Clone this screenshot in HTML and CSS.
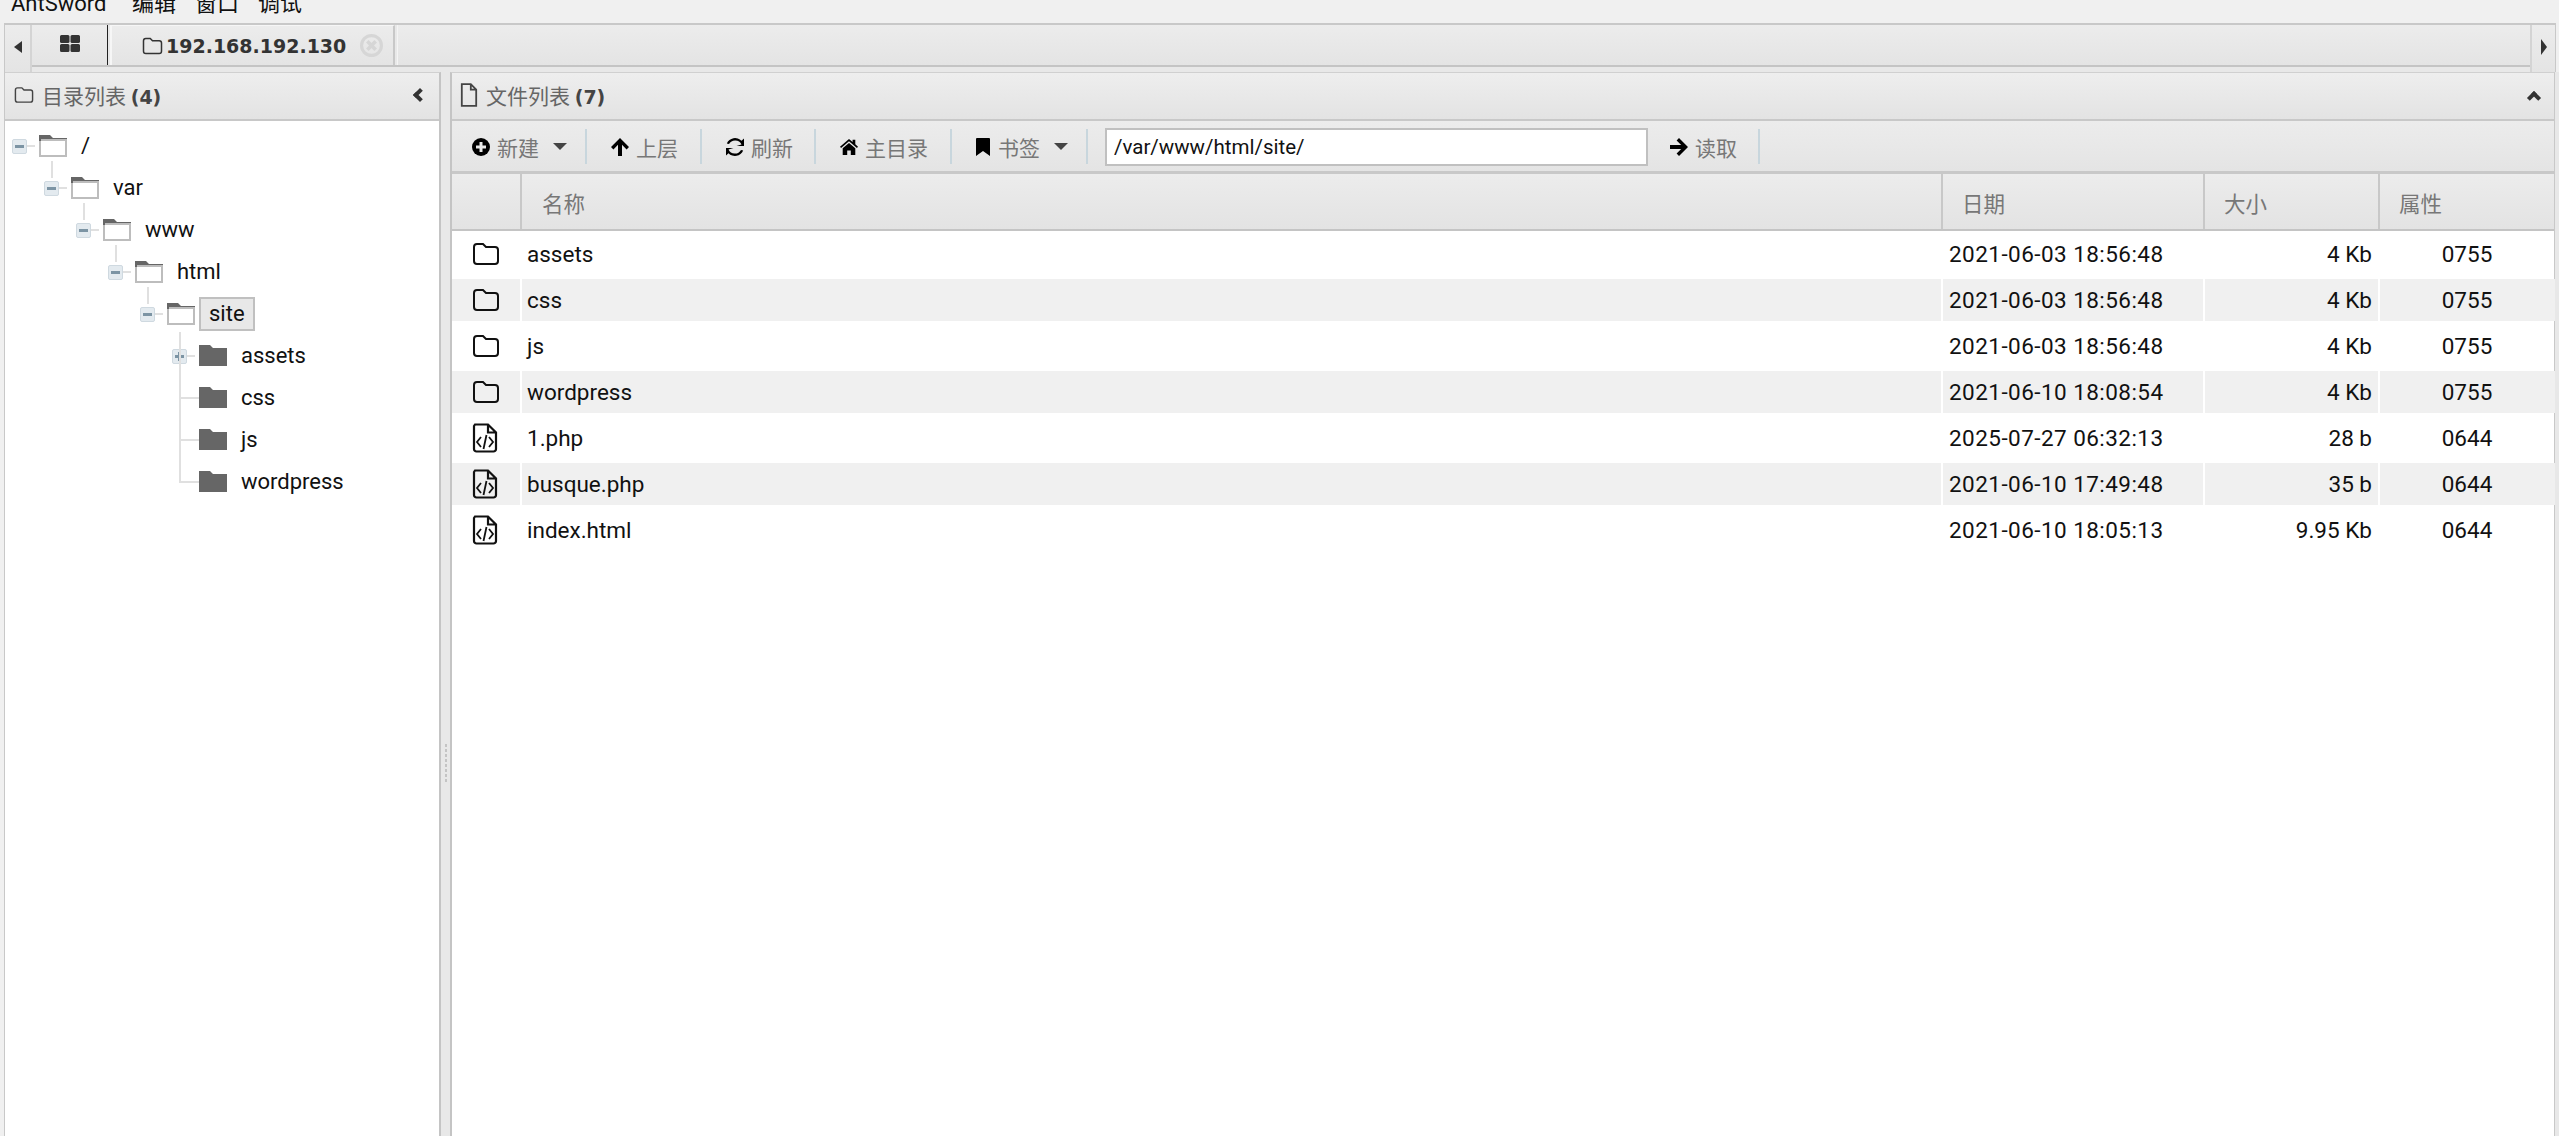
FILE: index.html
```html
<!DOCTYPE html>
<html lang="zh">
<head>
<meta charset="utf-8">
<title>AntSword</title>
<link rel="stylesheet" href="styles.css">
</head>
<body>
<svg class="defs" width="0" height="0">
  <symbol id="i-folder-o" viewBox="0 0 28 24"><path d="M5 2h6l3 3h9a3 3 0 0 1 3 3v11a3 3 0 0 1-3 3H5a3 3 0 0 1-3-3V5a3 3 0 0 1 3-3z" fill="none" stroke="currentColor" stroke-width="2"/></symbol>
  <symbol id="i-file-o" viewBox="0 0 20 26"><path d="M2 1h10l6 6v18H2zM12 1v6h6" fill="none" stroke="currentColor" stroke-width="2"/></symbol>
  <symbol id="i-code" viewBox="0 0 26 30"><path d="M3 1.500h13l8 8V26a2.500 2.500 0 0 1-2.500 2.500h-17A2.500 2.500 0 0 1 2 26V3zM16 1.500V9.500h8" fill="none" stroke="currentColor" stroke-width="2.200"/><path d="M9 14l-4 5 4 5M17 14l4 5-4 5M14.500 12l-3 14" fill="none" stroke="currentColor" stroke-width="1.800"/></symbol>
  <symbol id="i-tree-open" viewBox="0 0 28 22"><path d="M0 0h11l3 3h14v3H0z" fill="#666"/><path d="M1 5h26v16H1z" fill="#fff" stroke="#bdbdbd" stroke-width="2"/><path d="M0 0h2v6H0z" fill="#666"/></symbol>
  <symbol id="i-tree-full" viewBox="0 0 28 22"><path d="M0 0h11l3 3h14v18H0z" fill="#666"/></symbol>
  <symbol id="i-plus" viewBox="0 0 18 18"><circle cx="9" cy="9" r="9"/><path d="M7.500 4h3v3.500H14v3h-3.500V14h-3v-3.500H4v-3h3.500z" fill="#e8e8e8"/></symbol>
  <symbol id="i-up" viewBox="0 0 18 18"><path d="M9 0l9 9-2.400 2.400-4.600-4.600V18H7V6.800l-4.600 4.600L0 9z"/></symbol>
  <symbol id="i-right" viewBox="0 0 18 18"><path d="M18 9l-9 9-2.400-2.400 4.600-4.600H0V7h11.200L6.600 2.400 9 0z"/></symbol>
  <symbol id="i-refresh" viewBox="0 0 18 18"><path d="M15.500 6.500A7 7 0 0 0 3 6L.8 5.400A9 9 0 0 1 15.500 2.800L18 .5V8h-7.500z"/><path d="M2.500 11.500A7 7 0 0 0 15 12l2.200.6A9 9 0 0 1 2.500 15.200L0 17.500V10h7.500z"/></symbol>
  <symbol id="i-home" viewBox="0 0 20 18"><path d="M10 0l4 3.400V1h3v5l3 2.600-1.200 1.400L10 2.600 1.200 10 0 8.600z"/><path d="M10 4.500l7 5.800V18h-5v-5H8v5H3v-7.700z"/></symbol>
  <symbol id="i-bookmark" viewBox="0 0 14 18"><path d="M1 0h12a1 1 0 0 1 1 1v17l-7-5-7 5V1a1 1 0 0 1 1-1z"/></symbol>
  <symbol id="i-grid" viewBox="0 0 20 17"><path d="M0 1.500A1.500 1.500 0 0 1 1.500 0H8a1.500 1.500 0 0 1 1.500 1.500V7A1.500 1.500 0 0 1 8 8H1.500A1.500 1.500 0 0 1 0 7zM10.500 1.500A1.500 1.500 0 0 1 12 0h6.500A1.500 1.500 0 0 1 20 1.500V7a1.500 1.500 0 0 1-1.500 1H12a1.500 1.500 0 0 1-1.500-1zM0 10.500A1.500 1.500 0 0 1 1.500 9H8a1.500 1.500 0 0 1 1.500 1.500v5A1.500 1.500 0 0 1 8 17H1.500A1.500 1.500 0 0 1 0 15.500zM10.500 10.500A1.500 1.500 0 0 1 12 9h6.500a1.500 1.500 0 0 1 1.500 1.500v5a1.500 1.500 0 0 1-1.500 1.500H12a1.500 1.500 0 0 1-1.500-1.500z"/></symbol>
  <symbol id="i-close" viewBox="0 0 22 22"><circle cx="11" cy="11" r="9.500" fill="none" stroke="currentColor" stroke-width="3"/><path d="M7 7l8 8M15 7l-8 8" fill="none" stroke="currentColor" stroke-width="3.500"/></symbol>
</svg>

<div class="app">
  <nav class="menubar">
    <span class="menu-item menu-brand">AntSword</span>
    <span class="menu-item">编辑</span>
    <span class="menu-item">窗口</span>
    <span class="menu-item">调试</span>
  </nav>

  <div class="tabbar">
    <div class="tab-arrow"><span class="caret-left"></span></div>
    <div class="tab-strip">
      <div class="tab tab-home"><svg class="ic-grid"><use href="#i-grid"/></svg></div>
      <div class="tab tab-active">
        <svg class="ic-tab-folder"><use href="#i-folder-o"/></svg>
        <span class="tab-title">192.168.192.130</span>
        <svg class="ic-close"><use href="#i-close"/></svg>
      </div>
      <div class="tab-rest"></div>
    </div>
    <div class="tab-arrow tab-arrow-right"><span class="caret-right"></span></div>
  </div>

  <main class="workspace">
    <aside class="panel-left">
      <header class="panel-head">
        <svg class="ic-head-folder"><use href="#i-folder-o"/></svg>
        <span class="head-title">目录列表 <b>(4)</b></span>
        <span class="chevron chevron-left"></span>
      </header>
      <div class="tree">
        <div class="node l0"><span class="exp minus"></span><svg class="tf"><use href="#i-tree-open"/></svg><span class="nl">/</span></div>
        <div class="node l1 has-up"><span class="exp minus"></span><svg class="tf"><use href="#i-tree-open"/></svg><span class="nl">var</span></div>
        <div class="node l2 has-up"><span class="exp minus"></span><svg class="tf"><use href="#i-tree-open"/></svg><span class="nl">www</span></div>
        <div class="node l3 has-up"><span class="exp minus"></span><svg class="tf"><use href="#i-tree-open"/></svg><span class="nl">html</span></div>
        <div class="node l4 has-up"><span class="exp minus"></span><svg class="tf"><use href="#i-tree-open"/></svg><span class="nl nl-sel">site</span></div>
        <div class="node l5 has-up has-down"><span class="exp plus"></span><svg class="tf"><use href="#i-tree-full"/></svg><span class="nl">assets</span></div>
        <div class="node l5 has-through"><span class="exp none"></span><svg class="tf"><use href="#i-tree-full"/></svg><span class="nl">css</span></div>
        <div class="node l5 has-through"><span class="exp none"></span><svg class="tf"><use href="#i-tree-full"/></svg><span class="nl">js</span></div>
        <div class="node l5 has-last"><span class="exp none"></span><svg class="tf"><use href="#i-tree-full"/></svg><span class="nl">wordpress</span></div>
      </div>
    </aside>

    <div class="splitter"><span class="grip"></span></div>

    <section class="panel-right">
      <header class="panel-head">
        <svg class="ic-head-file"><use href="#i-file-o"/></svg>
        <span class="head-title">文件列表 <b>(7)</b></span>
        <span class="chevron chevron-up"></span>
      </header>
      <div class="toolbar">
        <div class="tb tb-new"><svg class="ti"><use href="#i-plus"/></svg><span>新建</span><i class="caret-down"></i></div>
        <div class="tb tb-up"><svg class="ti"><use href="#i-up"/></svg><span>上层</span></div>
        <div class="tb tb-refresh"><svg class="ti"><use href="#i-refresh"/></svg><span>刷新</span></div>
        <div class="tb tb-home"><svg class="ti"><use href="#i-home"/></svg><span>主目录</span></div>
        <div class="tb tb-mark"><svg class="ti ti-mark"><use href="#i-bookmark"/></svg><span>书签</span><i class="caret-down"></i></div>
        <div class="path-wrap"><input class="path" type="text" value="/var/www/html/site/"></div>
        <div class="tb tb-read"><svg class="ti"><use href="#i-right"/></svg><span>读取</span></div>
      </div>
      <div class="grid-head">
        <div class="gh"></div>
        <div class="gh gh-name">名称</div>
        <div class="gh">日期</div>
        <div class="gh">大小</div>
        <div class="gh gh-last">属性</div>
      </div>
      <div class="grid-body">
        <div class="row"><div class="c c-ic"><svg class="fi"><use href="#i-folder-o"/></svg></div><div class="c c-name">assets</div><div class="c c-date">2021-06-03 18:56:48</div><div class="c c-size">4 Kb</div><div class="c c-attr">0755</div></div>
        <div class="row alt"><div class="c c-ic"><svg class="fi"><use href="#i-folder-o"/></svg></div><div class="c c-name">css</div><div class="c c-date">2021-06-03 18:56:48</div><div class="c c-size">4 Kb</div><div class="c c-attr">0755</div></div>
        <div class="row"><div class="c c-ic"><svg class="fi"><use href="#i-folder-o"/></svg></div><div class="c c-name">js</div><div class="c c-date">2021-06-03 18:56:48</div><div class="c c-size">4 Kb</div><div class="c c-attr">0755</div></div>
        <div class="row alt"><div class="c c-ic"><svg class="fi"><use href="#i-folder-o"/></svg></div><div class="c c-name">wordpress</div><div class="c c-date">2021-06-10 18:08:54</div><div class="c c-size">4 Kb</div><div class="c c-attr">0755</div></div>
        <div class="row"><div class="c c-ic"><svg class="ci"><use href="#i-code"/></svg></div><div class="c c-name">1.php</div><div class="c c-date">2025-07-27 06:32:13</div><div class="c c-size">28 b</div><div class="c c-attr">0644</div></div>
        <div class="row alt"><div class="c c-ic"><svg class="ci"><use href="#i-code"/></svg></div><div class="c c-name">busque.php</div><div class="c c-date">2021-06-10 17:49:48</div><div class="c c-size">35 b</div><div class="c c-attr">0644</div></div>
        <div class="row"><div class="c c-ic"><svg class="ci"><use href="#i-code"/></svg></div><div class="c c-name">index.html</div><div class="c c-date">2021-06-10 18:05:13</div><div class="c c-size">9.95 Kb</div><div class="c c-attr">0644</div></div>
      </div>
    </section>
  </main>
</div>
</body>
</html>
```

FILE: styles.css
```css
* { box-sizing: border-box; }
html, body { margin: 0; height: 100%; overflow: hidden; }
body {
  background: #f0f0f0;
  color: #111;
  font-family: Roboto, "Noto Sans CJK SC", sans-serif;
  font-size: 22px;
}
.defs { position: absolute; }
svg { display: block; fill: currentColor; flex: none; }

.app { width: 2559px; height: 1136px; display: flex; flex-direction: column; }

/* menu */
.menubar { height: 23px; flex: none; display: flex; overflow: hidden; background: #f0f0f0; padding-left: 11px; }
.menu-item { margin-top: -11px; margin-right: 24px; line-height: 30px; font-size: 22px; color: #111; width: 39px; white-space: nowrap; }
.menu-brand { width: 97px; }

/* tabs */
.tabbar { height: 49px; width: 2552px; flex: none; display: flex; margin-left: 4px; border: solid #c8c8c8; border-width: 2px 1px 0 1px; background: #e8e8e8; }
.tab-arrow { width: 27px; flex: none; display: flex; align-items: center; justify-content: center; border-right: 2px solid #d4d4d4; padding-bottom: 3px; background: linear-gradient(#ececec, #e4e4e4); }
.tab-arrow-right { width: 25px; border-right: 0; border-left: 2px solid #d4d4d4; }
.caret-left { border: solid transparent; border-width: 6px 8px 6px 0; border-right-color: #333; }
.caret-right { border: solid transparent; border-width: 8px 0 8px 6px; border-left-color: #333; }
.tab-strip { flex: 1; display: flex; height: 42px; border-bottom: 2px solid #c4c4c4; }
.tab { height: 40px; display: flex; align-items: center; flex: none; background: linear-gradient(#ececec, #e4e4e4); }
.tab-home { width: 76px; justify-content: center; border-right: 1px solid #222; color: #333; }
.ic-grid { width: 20px; height: 17px; margin-bottom: 4px; }
.tab-active { width: 285px; margin-left: 2px; padding-left: 30px; border: solid #f6f6f6; border-width: 1px 2px 0; border-right-color: #c8c8c8; color: #333; }
.ic-tab-folder { width: 21px; height: 18px; margin-right: 3px; }
.tab-title { font-family: "DejaVu Sans", sans-serif; font-weight: 700; font-size: 19px; }
.ic-close { width: 23px; height: 23px; margin-left: 14px; color: #d6d6d6; }
.tab-rest { flex: 1; height: 40px; margin-left: 2px; background: linear-gradient(#ececec, #e4e4e4); border-left: 1px solid #f4f4f4; }

/* workspace */
.workspace { flex: 1; display: flex; margin-left: 4px; min-height: 0; border-left: 1px solid #c8c8c8; background: #e8e8e8; }
.panel-left { width: 436px; flex: none; background: #fff; border-right: 2px solid #c4c4c4; border-top: 1px solid #d0d0d0; display: flex; flex-direction: column; }
.splitter { width: 9px; flex: none; background: #e8e8e8; display: flex; align-items: flex-start; justify-content: center; padding-top: 672px; }
.grip { width: 2px; height: 40px; background: repeating-linear-gradient(#c4c4c4 0 3px, transparent 3px 5px); }
.panel-right { width: 2105px; flex: none; background: #fff; border-left: 2px solid #c4c4c4; border-right: 1px solid #c8c8c8; border-top: 1px solid #d0d0d0; display: flex; flex-direction: column; }

.panel-head { height: 48px; flex: none; display: flex; align-items: center; padding: 0 0 3px 9px; border-bottom: 2px solid #c8c8c8; background: linear-gradient(#eeeeee, #e3e3e3); color: #444; }
.panel-right .panel-head { padding-left: 8px; }
.ic-head-folder { width: 20px; height: 18px; margin-right: 8px; }
.ic-head-file { width: 18px; height: 24px; margin-right: 8px; }
.head-title { font-family: "Noto Sans CJK SC", sans-serif; font-size: 21px; color: #666; flex: 1; white-space: nowrap; }
.head-title b { font-family: "DejaVu Sans", sans-serif; font-size: 19px; font-weight: 700; color: #444; }
.chevron { width: 10px; height: 10px; border: solid #333; border-width: 4px 0 0 4px; }
.chevron-left { transform: rotate(-45deg); margin-right: 14px; }
.chevron-up { transform: rotate(45deg); margin-right: 15px; margin-top: 6px; }

/* tree */
.tree { padding-top: 4px; }
.node { height: 42px; display: flex; align-items: center; position: relative; }
.l0 { padding-left: 7px; }
.l1 { padding-left: 39px; }
.l2 { padding-left: 71px; }
.l3 { padding-left: 103px; }
.l4 { padding-left: 135px; }
.l5 { padding-left: 167px; }
.exp { width: 15px; height: 15px; flex: none; margin-right: 12px; border-radius: 2px; background: #e3eaef; border: 1px solid #cfd9e0; position: relative; }
.exp::before { content: ""; position: absolute; left: 2px; top: 5px; width: 9px; height: 3px; background: #7c94a4; }
.exp.plus::after { content: ""; position: absolute; left: 5px; top: 2px; width: 3px; height: 9px; background: #7c94a4; }
.exp.none { background: none; border-color: transparent; }
.exp.none::before { display: none; }
.node::before { content: ""; position: absolute; height: 2px; width: 8px; background: #e0e0e0; top: 20px; margin-left: 15px; }
.l0::before { left: 7px; }
.l1::before { left: 39px; }
.l2::before { left: 71px; }
.l3::before { left: 103px; }
.l4::before { left: 135px; }
.l5::before { left: 167px; }
.l5.has-through::before, .l5.has-last::before { left: 174px; width: 20px; margin-left: 0; }
.node.has-up::after { content: ""; position: absolute; width: 2px; background: #e0e0e0; top: -6px; height: 17px; }
.l1.has-up::after { left: 46px; }
.l2.has-up::after { left: 78px; }
.l3.has-up::after { left: 110px; }
.l4.has-up::after { left: 142px; }
.l5.has-up::after { left: 174px; height: 50px; top: -3px; }
.l5.has-through::after { content: ""; position: absolute; left: 174px; top: 0; width: 2px; height: 42px; background: #e0e0e0; }
.l5.has-last::after { content: ""; position: absolute; left: 174px; top: 0; width: 2px; height: 22px; background: #e0e0e0; }
.tf { width: 28px; height: 22px; margin-right: 14px; }
.nl { font-size: 22px; line-height: 30px; color: #111; white-space: nowrap; }
.nl-sel { margin-left: -10px; padding: 0 8px; height: 34px; line-height: 30px; background: #e8e8e8; border: 2px solid #c0c0c0; }

/* toolbar */
.toolbar { height: 53px; flex: none; display: flex; align-items: center; padding-top: 1px; border-bottom: 3px solid #c8c8c8; background: linear-gradient(#ececec, #e4e4e4); font-family: "Noto Sans CJK SC", sans-serif; font-size: 21px; color: #777; }
.tb { display: flex; align-items: center; height: 35px; flex: none; border-right: 2px solid #c8d6dd; white-space: nowrap; }
.tb span { line-height: 26px; }
.ti { width: 18px; height: 18px; color: #000; margin-right: 7px; }
.ti-mark { width: 14px; margin-right: 8px; }
.tb-new { width: 135px; padding-left: 20px; }
.tb-up { width: 115px; padding-left: 24px; }
.tb-refresh { width: 114px; padding-left: 24px; }
.tb-home { width: 136px; padding-left: 24px; }
.tb-mark { width: 136px; padding-left: 24px; }
.caret-down { width: 0; height: 0; margin-left: 14px; border: solid transparent; border-width: 7px 7px 0; border-top-color: #444; }
.path-wrap { width: 560px; flex: none; padding-left: 17px; }
.path { display: block; width: 543px; height: 38px; padding: 0 7px; border: 2px solid #c0c0c0; background: #fff; font: 20.500px Roboto, sans-serif; color: #111; outline: 0; }
.tb-read { width: 112px; padding-left: 22px; }

/* grid */
.grid-head { height: 57px; flex: none; display: grid; grid-template-columns: 70px 1421px 262px 175px 175px; border-bottom: 2px solid #c4c4c4; background: linear-gradient(#ececec, #e3e3e3); font-family: "Noto Sans CJK SC", sans-serif; font-size: 21.500px; color: #777; }
.gh { border-right: 2px solid #c8c8c8; padding: 2px 0 0 19px; display: flex; align-items: center; }
.gh-name { padding-left: 20px; }
.gh-last { border-right: 0; }
.grid-body { padding-top: 2px; }
.row { display: grid; grid-template-columns: 70px 1421px 262px 175px 175px; height: 46px; border-bottom: 4px solid #fff; }
.c { display: flex; align-items: center; border-right: 2px solid #fff; font-size: 22.500px; color: #111; white-space: nowrap; }
.alt .c { background: #f0f0f0; }
.c-ic { padding-left: 20px; }
.fi { width: 28px; height: 24px; color: #111; }
.ci { width: 26px; height: 30px; color: #111; }
.c-name { padding-left: 5px; }
.c-date { padding-left: 6px; letter-spacing: .45px; }
.c-size { justify-content: flex-end; padding-right: 6px; }
.c-attr { justify-content: center; border-right: 0; padding-right: 1px; }
```
